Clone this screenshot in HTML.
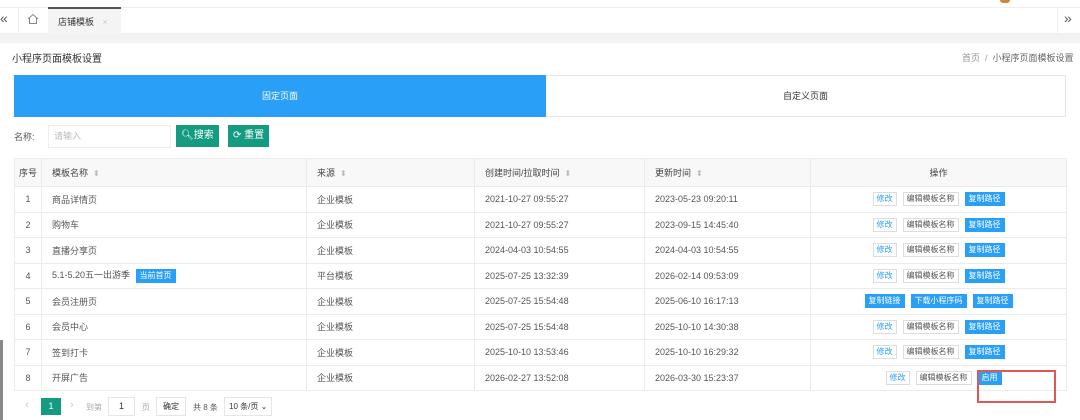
<!DOCTYPE html>
<html><head><meta charset="utf-8"><style>
*{box-sizing:border-box;margin:0;padding:0}
body{width:1080px;height:420px;overflow:hidden;background:#fff;font-family:"Liberation Sans","Noto Sans CJK SC",sans-serif;font-size:9px;color:#555;position:relative}
.a{position:absolute}
.top{left:0;width:1080px;border-top:1px solid #eee;border-bottom:1px solid #eee;top:7px;height:27px}
.gray{left:0;top:34px;width:1080px;height:9px;background:#f2f2f2}
table{border-collapse:collapse;position:absolute;left:14px;top:158px;width:1052px;table-layout:fixed}
td,th{border:1px solid #ebebeb;height:25.5px;padding:0 10px;font-weight:normal;text-align:left;white-space:nowrap;color:#555}
th{height:28px;background:#f8f8f8;color:#444}
td.c,th.c{text-align:center;padding:0}
.s{color:#bbb;font-size:8px;margin-left:5px}
.b{display:inline-block;font-size:8px;height:14px;line-height:12px;padding:0 3px;border:1px solid #ddd;background:#fff;color:#555;margin:0 3px;vertical-align:middle}
.b.m{color:#2a9ff7}
.b.p{background:#2a9ff7;border-color:#2a9ff7;color:#fff}
.g{background:#149b82;color:#fff;height:22px;line-height:22px;font-size:10px;padding:0 5px}
</style></head><body>
<div class="a top"></div>
<div class="a" style="left:0;top:10px;font-size:14px;color:#555">«</div>
<div class="a" style="left:18px;top:7px;width:1px;height:27px;background:#eee"></div>
<svg class="a" style="left:27px;top:13px" width="12" height="12" viewBox="0 0 12 12"><path d="M1 6L6 1.5 11 6M2.5 5v5.5h7V5" fill="none" stroke="#888" stroke-width="1"/></svg>
<div class="a" style="left:48px;top:7px;width:73px;height:27px;background:#f4f4f4;border-top:2px solid #555"></div>
<div class="a" style="left:58px;top:15px;font-size:9px;color:#333">店铺模板 <span style="color:#ccc;margin-left:6px">×</span></div>
<div class="a" style="left:1057px;top:7px;width:1px;height:27px;background:#eee"></div>
<div class="a" style="left:1064px;top:10px;font-size:14px;color:#555">»</div>
<div class="a" style="left:1000px;top:0;width:10px;height:3px;background:#c98a3b;border-radius:0 0 5px 5px"></div>
<div class="a gray"></div>
<div class="a" style="left:12px;top:50px;font-size:10px;color:#333">小程序页面模板设置</div>
<div class="a" style="left:962px;top:51px;font-size:9px;color:#999">首页 &nbsp;/&nbsp; <span style="color:#666">小程序页面模板设置</span></div>
<div class="a" style="left:14px;top:75px;width:532px;height:42px;background:#2a9ff7;color:#fff;text-align:center;line-height:42px;font-size:9px">固定页面</div>
<div class="a" style="left:546px;top:75px;width:520px;height:42px;border:1px solid #e6e6e6;border-left:none;text-align:center;line-height:40px;color:#333">自定义页面</div>
<div class="a" style="left:14px;top:130px;color:#555">名称:</div>
<div class="a" style="left:48px;top:125px;width:123px;height:23px;border:1px solid #eee;padding-left:5px;line-height:21px;color:#bbb">请输入</div>
<div class="a g" style="left:176px;top:125px">🔍︎搜索</div>
<div class="a g" style="left:228px;top:125px">⟳ 重置</div>
<table>
<colgroup><col style="width:27px"><col style="width:265px"><col style="width:168px"><col style="width:170px"><col style="width:166px"><col style="width:256px"></colgroup>
<tr><th class="c">序号</th><th>模板名称<span class="s">⬍</span></th><th>来源<span class="s">⬍</span></th><th>创建时间/拉取时间<span class="s">⬍</span></th><th>更新时间<span class="s">⬍</span></th><th class="c">操作</th></tr>
<tr><td class="c">1</td><td>商品详情页</td><td>企业模板</td><td>2021-10-27 09:55:27</td><td>2023-05-23 09:20:11</td><td class="c"><span class="b m">修改</span><span class="b">编辑模板名称</span><span class="b p">复制路径</span></td></tr>
<tr><td class="c">2</td><td>购物车</td><td>企业模板</td><td>2021-10-27 09:55:27</td><td>2023-09-15 14:45:40</td><td class="c"><span class="b m">修改</span><span class="b">编辑模板名称</span><span class="b p">复制路径</span></td></tr>
<tr><td class="c">3</td><td>直播分享页</td><td>企业模板</td><td>2024-04-03 10:54:55</td><td>2024-04-03 10:54:55</td><td class="c"><span class="b m">修改</span><span class="b">编辑模板名称</span><span class="b p">复制路径</span></td></tr>
<tr><td class="c">4</td><td>5.1-5.20五一出游季 <span class="b p">当前首页</span></td><td>平台模板</td><td>2025-07-25 13:32:39</td><td>2026-02-14 09:53:09</td><td class="c"><span class="b m">修改</span><span class="b">编辑模板名称</span><span class="b p">复制路径</span></td></tr>
<tr><td class="c">5</td><td>会员注册页</td><td>企业模板</td><td>2025-07-25 15:54:48</td><td>2025-06-10 16:17:13</td><td class="c"><span class="b p">复制链接</span><span class="b p">下载小程序码</span><span class="b p">复制路径</span></td></tr>
<tr><td class="c">6</td><td>会员中心</td><td>企业模板</td><td>2025-07-25 15:54:48</td><td>2025-10-10 14:30:38</td><td class="c"><span class="b m">修改</span><span class="b">编辑模板名称</span><span class="b p">复制路径</span></td></tr>
<tr><td class="c">7</td><td>签到打卡</td><td>企业模板</td><td>2025-10-10 13:53:46</td><td>2025-10-10 16:29:32</td><td class="c"><span class="b m">修改</span><span class="b">编辑模板名称</span><span class="b p">复制路径</span></td></tr>
<tr><td class="c">8</td><td>开屏广告</td><td>企业模板</td><td>2026-02-27 13:52:08</td><td>2026-03-30 15:23:37</td><td class="c" style="padding-left:10px"><span class="b m">修改</span><span class="b">编辑模板名称</span><span class="b p">启用</span></td></tr>
</table>
<div class="a" style="left:977px;top:370px;width:79px;height:33px;border:2px solid #e05555"></div>
<div class="a" style="left:25px;top:399px;color:#ccc;font-size:11px">‹</div>
<div class="a" style="left:41px;top:398px;width:20px;height:17px;background:#149b82;color:#fff;text-align:center;line-height:17px;font-size:9px">1</div>
<div class="a" style="left:70px;top:399px;color:#ccc;font-size:11px">›</div>
<div class="a" style="left:86px;top:402px;color:#aaa;font-size:8px">到第</div>
<div class="a" style="left:108px;top:397px;width:27px;height:19px;border:1px solid #e6e6e6;text-align:center;line-height:17px;color:#333">1</div>
<div class="a" style="left:142px;top:402px;color:#aaa;font-size:8px">页</div>
<div class="a" style="left:156px;top:397px;width:30px;height:19px;border:1px solid #e6e6e6;text-align:center;line-height:17px;color:#333;font-size:8px">确定</div>
<div class="a" style="left:193px;top:402px;color:#555;font-size:8px">共 8 条</div>
<div class="a" style="left:224px;top:397px;width:48px;height:19px;border:1px solid #e6e6e6;padding-left:4px;line-height:17px;color:#333;font-size:8px">10 条/页 ⌄</div>
<div class="a" style="left:0;top:340px;width:3px;height:80px;background:#888"></div>
</body></html>
